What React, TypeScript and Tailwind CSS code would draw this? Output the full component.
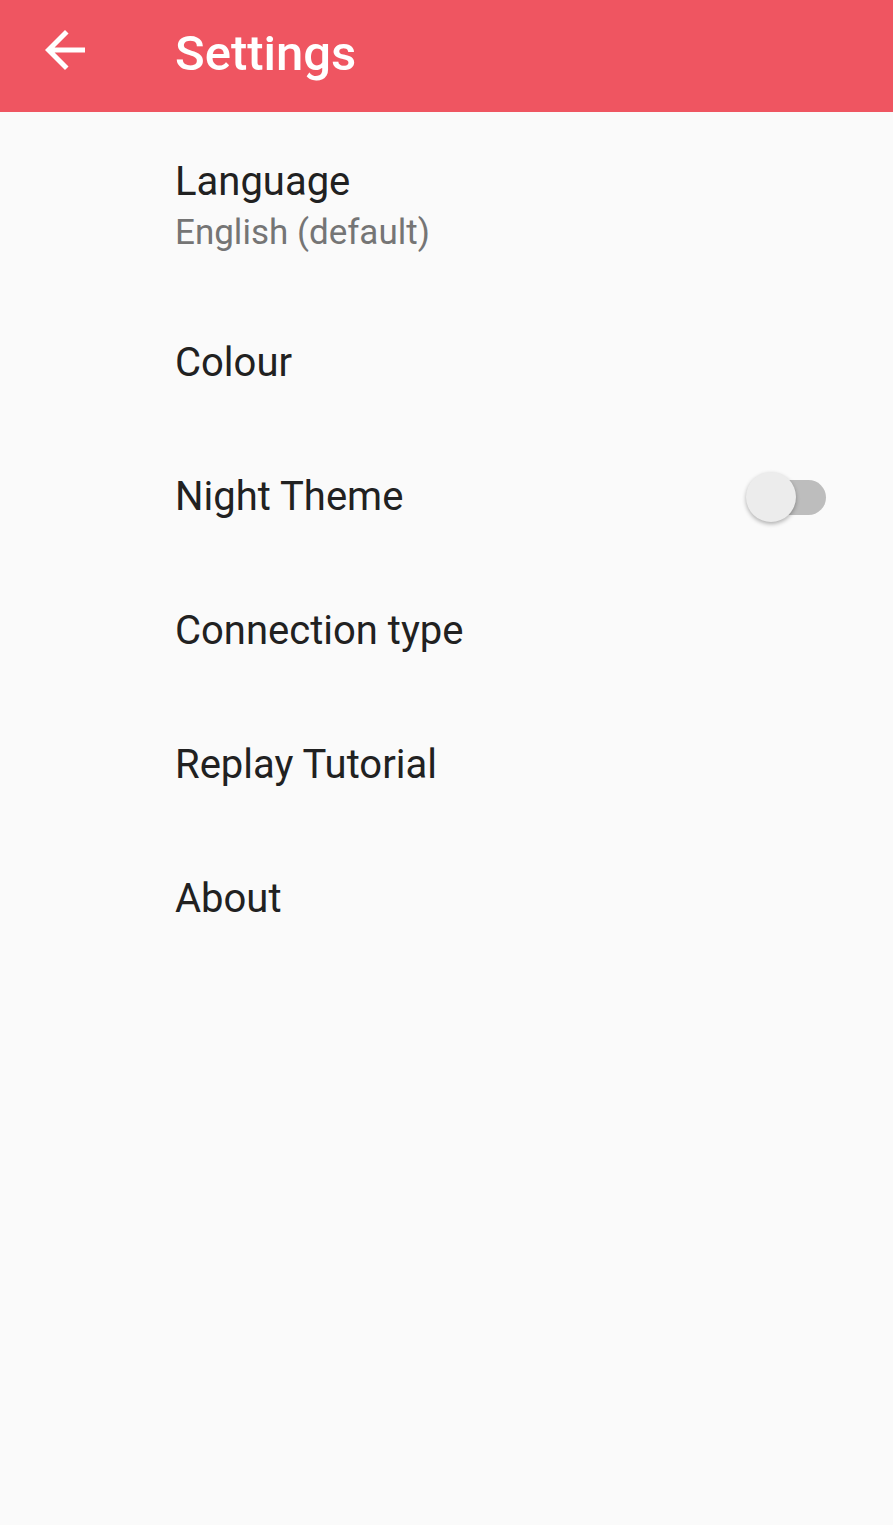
import React, { useState } from "react";

const rows = ["Colour", "Night Theme", "Connection type", "Replay Tutorial", "About"];

function BackArrow() {
  return (
    <svg viewBox="0 0 24 24" className="h-[60px] w-[60px]" fill="#ffffff">
      <path d="M20 11H7.83l5.59-5.59L12 4l-8 8 8 8 1.41-1.41L7.83 13H20v-2z" />
    </svg>
  );
}

function Toggle({ on, onClick }: { on: boolean; onClick: () => void }) {
  return (
    <button onClick={onClick} className="relative h-[52px] w-[80px]">
      <span
        className={
          "absolute right-0 top-[9px] h-[35px] w-[66px] rounded-full " +
          (on ? "bg-[#f7a1a7]" : "bg-[#bdbdbd]")
        }
      />
      <span
        className={
          "absolute top-[1px] h-[50px] w-[50px] rounded-full shadow-[0_2px_4px_rgba(0,0,0,0.3)] " +
          (on ? "right-0 bg-[#ef5561]" : "left-0 bg-[#ececec]")
        }
      />
    </button>
  );
}

export default function App() {
  const [night, setNight] = useState(false);
  return (
    <div
      className="flex min-h-[1525px] flex-col bg-[#fafafa]"
      style={{ fontFamily: "Roboto, 'Noto Sans', sans-serif" }}
    >
      <header className="flex h-[112px] items-center bg-[#ef5561]">
        <div className="mb-[12px] ml-[35px] flex h-[60px] w-[60px] items-center">
          <BackArrow />
        </div>
        <h1 className="mb-[6px] ml-[80px] text-[49px] font-medium leading-none text-white">Settings</h1>
      </header>

      <main className="flex flex-col">
        <div className="flex h-[184px] flex-col justify-center pl-[175px] pt-[4px]">
          <span className="text-[40px] leading-[48px] text-[#212121]">Language</span>
          <span className="mt-[5px] text-[35px] leading-[44px] text-[#757575]">English (default)</span>
        </div>
        {rows.map((label) => (
          <div key={label} className="flex h-[134px] items-center justify-between pl-[175px] pr-[67px]">
            <span className="text-[40px] text-[#212121]">{label}</span>
            {label === "Night Theme" ? <Toggle on={night} onClick={() => setNight(!night)} /> : null}
          </div>
        ))}
      </main>
    </div>
  );
}
